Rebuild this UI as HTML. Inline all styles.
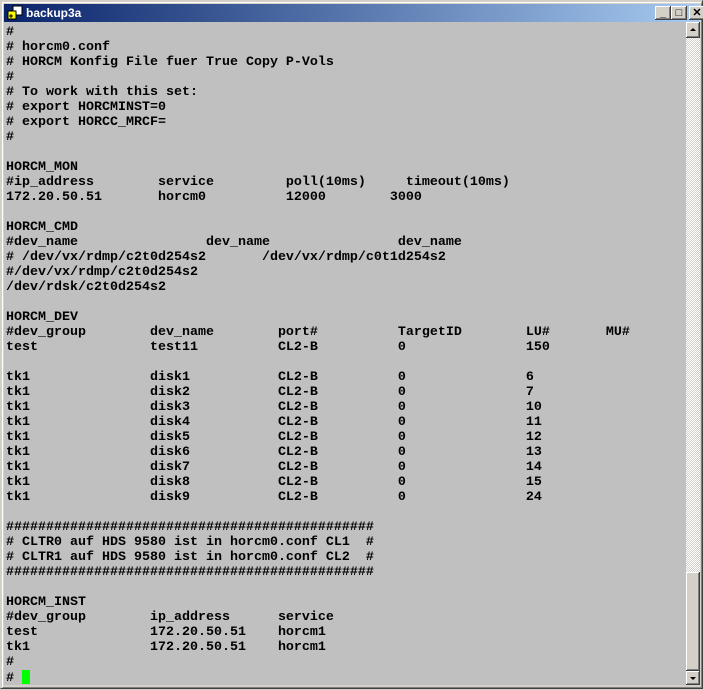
<!DOCTYPE html><html><head><style>
body{margin:0;width:703px;height:689px;background:#d4d0c8;position:relative;overflow:hidden;font-family:"Liberation Sans",sans-serif}
.win{position:absolute;left:0;top:0;width:701px;height:687px;border-top:1px solid #d4d0c8;border-left:1px solid #d4d0c8;border-right:1px solid #404040;border-bottom:1px solid #404040}
.inner{position:absolute;left:1px;top:1px;right:0;bottom:0;border-top:1px solid #fff;border-left:1px solid #fff;border-right:1px solid #808080;border-bottom:1px solid #808080}
.title{position:absolute;left:4px;top:4px;width:695px;height:18px;background:linear-gradient(90deg,#0a246a,#a6caf0);color:#fff;font-weight:bold;font-size:12px;line-height:18px}
.title span{position:absolute;left:22px;top:0}
.btn{position:absolute;top:2px;width:16px;height:14px;background:#d4d0c8;box-shadow:inset -1px -1px #404040,inset 1px 1px #fff,inset -2px -2px #808080;color:#000;font-size:11px;line-height:14px;text-align:center}
.term{position:absolute;left:4px;top:22px;width:682px;height:663px;background:#c0c0c0;overflow:hidden}
pre{margin:0;position:absolute;left:2px;top:3px;font-family:"Liberation Mono",monospace;font-weight:bold;font-size:13.33px;line-height:15px;color:#000}
.sb{position:absolute;left:686px;top:22px;width:14px;height:663px;background-color:#e8e6e2;background-image:repeating-conic-gradient(#d4d0c8 0 25%,#fff 0 50%);background-size:2px 2px}
.sbtn{position:absolute;left:0;width:14px;height:15px;background:#d4d0c8;box-shadow:inset -1px -1px #404040,inset 1px 1px #fff,inset -2px -2px #808080}
.cur{display:inline-block;width:8px;height:14px;background:#00ff00;vertical-align:-3px}
</style></head><body>
<div class="win"><div class="inner"></div></div>
<div class="title"><svg style="position:absolute;left:3px;top:1px" width="16" height="16"><rect x="6" y="1" width="9" height="9" fill="#fff" stroke="#000"/><rect x="1" y="6" width="8" height="8" fill="#ff0" stroke="#000"/><path d="M4 9v4M2 11h4" stroke="#000"/></svg><span>backup3a</span>
<div class="btn" style="left:651px">_</div><div class="btn" style="left:667px">□</div><div class="btn" style="left:685px;font-weight:bold">✕</div></div>
<div class="term"><pre>#
# horcm0.conf
# HORCM Konfig File fuer True Copy P-Vols
#
# To work with this set:
# export HORCMINST=0
# export HORCC_MRCF=
#

HORCM_MON
#ip_address        service         poll(10ms)     timeout(10ms)
172.20.50.51       horcm0          12000        3000

HORCM_CMD
#dev_name                dev_name                dev_name
# /dev/vx/rdmp/c2t0d254s2       /dev/vx/rdmp/c0t1d254s2
#/dev/vx/rdmp/c2t0d254s2
/dev/rdsk/c2t0d254s2

HORCM_DEV
#dev_group        dev_name        port#          TargetID        LU#       MU#
test              test11          CL2-B          0               150

tk1               disk1           CL2-B          0               6
tk1               disk2           CL2-B          0               7
tk1               disk3           CL2-B          0               10
tk1               disk4           CL2-B          0               11
tk1               disk5           CL2-B          0               12
tk1               disk6           CL2-B          0               13
tk1               disk7           CL2-B          0               14
tk1               disk8           CL2-B          0               15
tk1               disk9           CL2-B          0               24

##############################################
# CLTR0 auf HDS 9580 ist in horcm0.conf CL1  #
# CLTR1 auf HDS 9580 ist in horcm0.conf CL2  #
##############################################

HORCM_INST
#dev_group        ip_address      service
test              172.20.50.51    horcm1
tk1               172.20.50.51    horcm1
#
# <span class="cur"></span></pre></div>
<div class="sb">
<div class="sbtn" style="top:0;height:16px"><svg width="14" height="16"><path d="M4 9h6L7 6z" fill="#000"/></svg></div>
<div class="sbtn" style="top:550px;height:99px"></div>
<div class="sbtn" style="top:649px;height:14px"><svg width="14" height="14"><path d="M4 6h6L7 9z" fill="#000"/></svg></div>
</div>
</body></html>
